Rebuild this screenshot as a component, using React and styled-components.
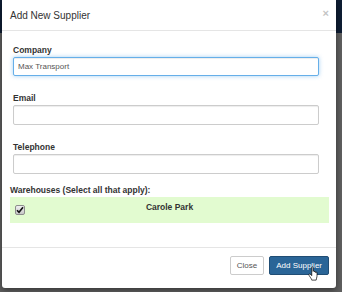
import React from "react";
import styled, { createGlobalStyle } from "styled-components";

const Global = createGlobalStyle`
  html, body { margin: 0; padding: 0; }
  body {
    width: 342px;
    height: 292px;
    overflow: hidden;
    font-family: "Liberation Sans", Arial, Helvetica, sans-serif;
    background: linear-gradient(to bottom, #0e1d33 0, #0e1d33 33px, #5f5f5f 33px, #5f5f5f 100%);
  }
`;

const Page = styled.div`
  display: flex;
  padding-left: 2px;
  height: 292px;
  box-sizing: border-box;
`;

const Modal = styled.div`
  width: 334px;
  height: 288px;
  background: #fff;
  border-radius: 0 0 3px 3px;
  box-shadow: 0 2px 6px rgba(0, 0, 0, 0.45);
  display: flex;
  flex-direction: column;
`;

const Header = styled.div`
  height: 30px;
  border-bottom: 1px solid #e5e5e5;
  display: flex;
  align-items: center;
  justify-content: space-between;
  padding: 0 7px 0 8px;
`;

const Title = styled.h4`
  margin: 0;
  font-size: 10px;
  font-weight: normal;
  color: #333;
  line-height: 14px;
  padding-top: 1px;
`;

const CloseX = styled.span`
  font-size: 11px;
  font-weight: bold;
  color: #c4c4c4;
  line-height: 10px;
  margin-top: -4px;
`;

const Body = styled.div`
  padding: 13px 7px 0 8px;
  display: flex;
  flex-direction: column;
`;

const Group = styled.div`
  padding: 0 10px 0 3px;
  margin-bottom: ${(p) => p.$mb}px;
`;

const Label = styled.label`
  display: block;
  font-size: 8.5px;
  font-weight: bold;
  color: #333;
  line-height: 12px;
  margin-bottom: 1px;
`;

const Input = styled.input`
  display: block;
  box-sizing: border-box;
  width: 100%;
  height: ${(p) => p.$h || 19}px;
  margin: 0;
  padding: 0 4px;
  font-family: inherit;
  font-size: 8px;
  color: #555;
  background: #fff;
  border: 1px solid ${(p) => (p.$focus ? "#66afe9" : "#ccc")};
  border-radius: 2px;
  outline: none;
  box-shadow: inset 0 1px 1px rgba(0, 0, 0, 0.075)
    ${(p) => (p.$focus ? ", 0 0 4px rgba(102, 175, 233, 0.6)" : "")};
`;

const SectionLabel = styled(Label)`
  padding-left: 0;
`;

const WarehouseRow = styled.div`
  display: grid;
  grid-template-columns: 1fr auto 1fr;
  align-items: start;
  background: #e2fbd0;
  padding: 4px 5px 8px;
  height: 26px;
  box-sizing: border-box;
`;

const CheckBox = styled.span`
  justify-self: start;
  width: 10px;
  height: 10px;
  box-sizing: border-box;
  margin-top: 4px;
  border: 1px solid #8d8d8d;
  border-radius: 2px;
  background: linear-gradient(to bottom, #f0f0f0, #c8c8c8);
  display: flex;
  align-items: center;
  justify-content: center;
`;

const WarehouseName = styled.span`
  font-size: 8.5px;
  font-weight: bold;
  color: #333;
  line-height: 12px;
`;

const Footer = styled.div`
  margin-top: 24px;
  border-top: 1px solid #e5e5e5;
  padding: 8px 7px 0 0;
  display: flex;
  justify-content: flex-end;
  gap: 5px;
`;

const Button = styled.button`
  position: relative;
  height: 19px;
  margin: 0;
  padding: 0 6px;
  font-family: inherit;
  font-size: 8px;
  line-height: 17px;
  border-radius: 2px;
  border: 1px solid ${(p) => (p.$primary ? "#204d74" : "#ccc")};
  background: ${(p) => (p.$primary ? "#2a6597" : "#fff")};
  color: ${(p) => (p.$primary ? "#fff" : "#555")};
  cursor: pointer;
`;

const Cursor = styled.svg`
  position: absolute;
  left: 38px;
  top: 9px;
  width: 11px;
  height: 15px;
  pointer-events: none;
`;

export default function App() {
  return (
    <>
      <Global />
      <Page>
        <Modal>
          <Header>
            <Title>Add New Supplier</Title>
            <CloseX>×</CloseX>
          </Header>
          <Body>
            <Group $mb={16}>
              <Label>Company</Label>
              <Input $focus defaultValue="Max Transport" />
            </Group>
            <Group $mb={16}>
              <Label>Email</Label>
              <Input $h={20} />
            </Group>
            <Group $mb={10}>
              <Label>Telephone</Label>
              <Input $h={20} />
            </Group>
            <SectionLabel>Warehouses (Select all that apply):</SectionLabel>
            <WarehouseRow>
              <CheckBox>
                <svg width="8" height="8" viewBox="0 0 8 8">
                  <path d="M1 4.2 L3 6.3 L7 1.2" fill="none" stroke="#111" strokeWidth="1.6" />
                </svg>
              </CheckBox>
              <WarehouseName>Carole Park</WarehouseName>
            </WarehouseRow>
          </Body>
          <Footer>
            <Button>Close</Button>
            <Button $primary>
              Add Supplier
              <Cursor viewBox="0 0 12 17">
                <path
                  d="M4 1.5 C4 0.7 5.5 0.7 5.5 1.5 L5.5 6 C5.5 5.3 7 5.3 7 6 L7 6.8 C7 6.1 8.5 6.1 8.5 6.8 L8.5 7.6 C8.5 6.9 10 6.9 10 7.6 L10 11.5 C10 13 9 14.5 9 16 L4 16 C4 15 2.5 13 1.5 11.5 C0.8 10.5 0.5 9.6 1.2 9.2 C1.9 8.8 2.8 9.6 4 11 Z"
                  fill="#fff"
                  stroke="#000"
                  strokeWidth="0.8"
                  strokeLinejoin="round"
                />
              </Cursor>
            </Button>
          </Footer>
        </Modal>
      </Page>
    </>
  );
}
